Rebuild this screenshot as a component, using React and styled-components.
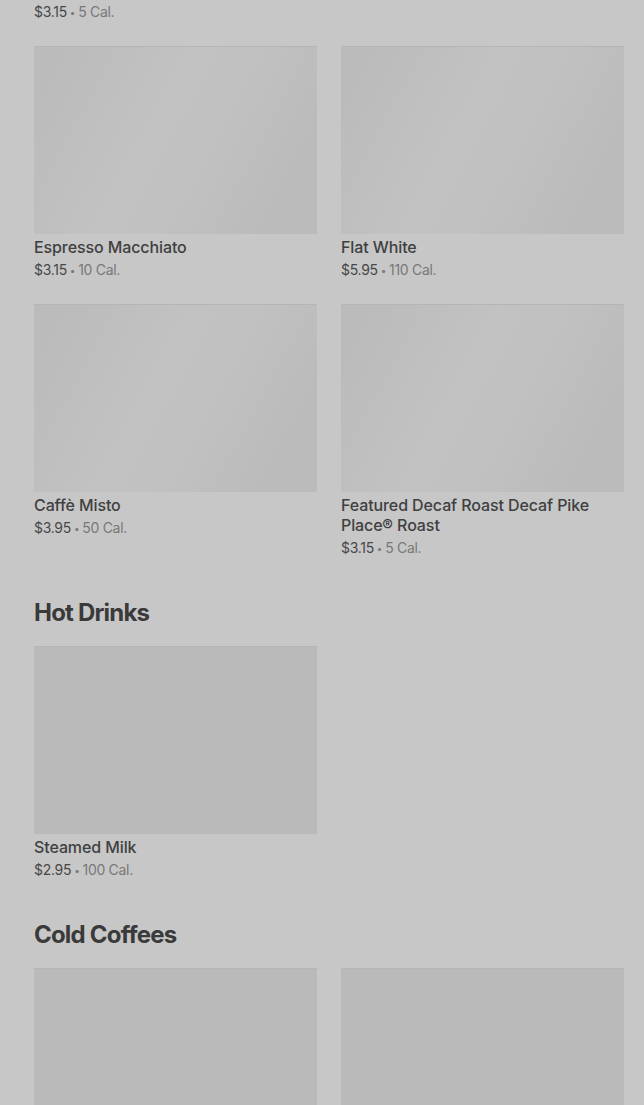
import styled, { createGlobalStyle } from 'styled-components'

const GlobalStyle = createGlobalStyle`
  html, body {
    margin: 0;
    padding: 0;
    background: #c7c7c7;
  }
  body {
    font-family: Inter, "Noto Sans", "Liberation Sans", sans-serif;
    -webkit-font-smoothing: antialiased;
  }
`;

const topRow = [
  { name: 'Espresso Macchiato', price: '$3.15', cal: '10 Cal.', shimmer: true },
  { name: 'Flat White', price: '$5.95', cal: '110 Cal.', shimmer: true },
  { name: 'Caffè Misto', price: '$3.95', cal: '50 Cal.', shimmer: true },
  { name: 'Featured Decaf Roast Decaf Pike Place® Roast', price: '$3.15', cal: '5 Cal.', shimmer: true },
];

const hotDrinks = [
  { name: 'Steamed Milk', price: '$2.95', cal: '100 Cal.' },
];

const coldCoffees = [
  { name: '', price: '', cal: '' },
  { name: '', price: '', cal: '' },
];

const Item = ({ item }) => (
  <Card>
    <Thumb $shimmer={item.shimmer} />
    {item.name && <ItemName>{item.name}</ItemName>}
    {item.price && (
      <Meta>
        {item.price}<Dot>•</Dot><Cal>{item.cal}</Cal>
      </Meta>
    )}
  </Card>
);

const App = () => {
  return (
    <>
      <GlobalStyle />
      <Page>
        <Grid>
          <Card>
            <CutMeta>
              $3.15<Dot>•</Dot><Cal>5 Cal.</Cal>
            </CutMeta>
          </Card>
        </Grid>
        <Grid $top>
          {topRow.map((item) => (
            <Item key={item.name} item={item} />
          ))}
        </Grid>

        <Section>
          <Heading>Hot Drinks</Heading>
          <Grid>
            {hotDrinks.map((item) => (
              <Item key={item.name} item={item} />
            ))}
          </Grid>
        </Section>

        <Section>
          <Heading>Cold Coffees</Heading>
          <Grid>
            {coldCoffees.map((item, i) => (
              <Item key={i} item={item} />
            ))}
          </Grid>
        </Section>
      </Page>
    </>
  );
}

export default App

const Page = styled.div`
  padding: 2px 20px 0 34px;
  height: 1105px;
  overflow: hidden;
  box-sizing: border-box;
`;

const Grid = styled.div`
  display: grid;
  grid-template-columns: 283px 283px;
  column-gap: 24px;
  row-gap: 24px;
  margin-top: ${(props) => (props.$top ? '24px' : '0')};
`;

const Card = styled.div`
  display: flex;
  flex-direction: column;
`;

const Thumb = styled.div`
  height: 188px;
  background: ${(props) =>
    props.$shimmer
      ? 'linear-gradient(118deg, #bbbbbb 8%, #c2c2c2 42%, #c1c1c1 58%, #bbbbbb 85%)'
      : '#bababa'};
  box-shadow: inset 0 1px 0 #b5b5b5;
`;

const ItemName = styled.div`
  margin-top: 3px;
  font-size: 16px;
  line-height: 20px;
  font-weight: 500;
  color: #404040;
  letter-spacing: -0.1px;
`;

const Meta = styled.div`
  margin-top: 3px;
  font-size: 14px;
  line-height: 20px;
  color: #474747;
  letter-spacing: -0.3px;
`;

const CutMeta = styled(Meta)`
  margin-top: 0;
`;

const Dot = styled.span`
  color: #7a7a7a;
  font-size: 10px;
  margin: 0 3px;
  vertical-align: 1px;
`;

const Cal = styled.span`
  color: #787878;
`;

const Section = styled.section`
  padding-top: 39px;
`;

const Heading = styled.h2`
  margin: 0 0 17px;
  font-size: 24px;
  line-height: 32px;
  font-weight: 700;
  color: #3a3a3a;
  letter-spacing: -0.8px;
`;
